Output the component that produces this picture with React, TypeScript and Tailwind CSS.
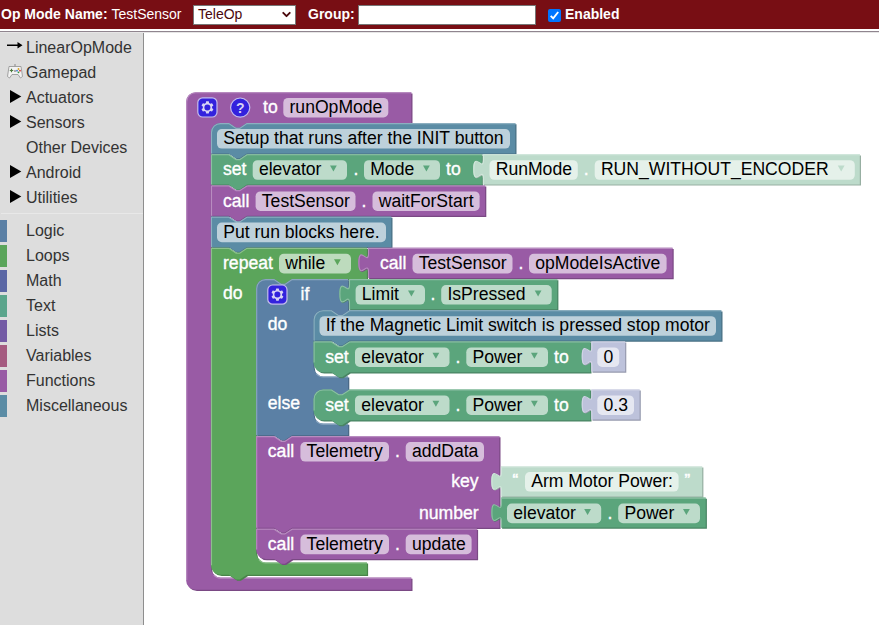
import React from "react";
import { ChevronDown } from "lucide-react";

const U = 1.2;
const PURPLE = "#995ba5";
const LOOP = "#5ba55b";
const TEAL = "#5ba57c";
const LOGIC = "#5b80a5";
const MISC = "#5b8ca5";
const MINT = "#bddbcb";
const LILAC = "#bdc2db";

const notch = `l ${6 * U},${4 * U} h ${3 * U} l ${6 * U},${-4 * U}`;
const notchBack = `l ${-6 * U},${4 * U} h ${-3 * U} l ${-6 * U},${-4 * U}`;
const tabUp = `c 0,${-10 * U} ${-8 * U},${8 * U} ${-8 * U},${-7.5 * U} s ${8 * U},${2.5 * U} ${8 * U},${-7.5 * U}`;
const R = 8 * U;
const BASE = 20.8;

type Hole = { x: number; top: number; bottom: number; arm: number };
type BlockProps = {
  x: number;
  y: number;
  right: number;
  bottom: number;
  fill: string;
  output?: boolean;
  hat?: boolean;
  round?: boolean;
  last?: boolean;
  holes?: Hole[];
};

function shade(hex: string, to: number, amount: number) {
  const n = parseInt(hex.slice(1), 16);
  const mix = (c: number) => Math.round(c + (to - c) * amount);
  return `rgb(${mix(n >> 16)},${mix((n >> 8) & 255)},${mix(n & 255)})`;
}

function Block({ x, y, right, bottom, fill, output, hat, round, last, holes = [] }: BlockProps) {
  const r = right - 1.2;
  const b = bottom - 1.2;
  const rounded = round || hat;
  let d = rounded ? `M ${x},${y + R} a ${R},${R} 0 0 1 ${R},${-R}` : `M ${x},${y}`;
  if (!output && !hat) d += ` H ${x + 15 * U} ${notch}`;
  d += ` H ${r}`;
  for (const h of holes) {
    d += ` V ${h.top} H ${h.x + 30 * U} ${notchBack} H ${h.x + R} a ${R},${R} 0 0 0 ${-R},${R} V ${h.bottom - R} a ${R},${R} 0 0 0 ${R},${R} H ${h.arm - 1.2}`;
  }
  d += ` V ${b}`;
  if (output) d += ` H ${x} V ${y + 20 * U} ${tabUp} Z`;
  else if (hat) d += ` H ${x + R} a ${R},${R} 0 0 1 ${-R},${-R} Z`;
  else d += ` H ${x + 30 * U} ${notchBack} ${last ? `H ${x + R} a ${R},${R} 0 0 1 ${-R},${-R}` : `H ${x}`} Z`;

  const lx = x + 0.6;
  const ly = y + 0.6;
  let light = output
    ? `M ${lx},${b} V ${y + 20 * U} ${tabUp} V ${ly}`
    : rounded
      ? `M ${lx},${last || hat ? b - R : b} V ${y + R} a ${R - 0.6},${R - 0.6} 0 0 1 ${R - 0.6},${-R + 0.6}`
      : `M ${lx},${last ? b - R : b} V ${ly}`;
  if (!output && !hat) light += ` H ${x + 15 * U} ${notch}`;
  light += ` H ${r}`;
  for (const h of holes) {
    light += ` M ${h.x + 2.8},${h.bottom - 2.8} A ${R},${R} 0 0 0 ${h.x + R},${h.bottom + 0.6} H ${h.arm - 1.2}`;
  }
  return (
    <g transform="translate(-0.5 -0.4)">
      <path d={d} transform="translate(1.2 1.2)" fill={shade(fill, 0, 0.2)} />
      <path d={d} fill={fill} />
      <path d={light} fill="none" stroke={shade(fill, 255, 0.3)} strokeWidth={1.1} />
    </g>
  );
}

function Label({ x, y, children, end }: { x: number; y: number; children: string; end?: boolean }) {
  return (
    <text x={x} y={y} fill="#fff" stroke="#fff" strokeWidth={0.35} textAnchor={end ? "end" : "start"}>
      {children}
    </text>
  );
}

type FieldProps = { x: number; to: number; row: number; children: string; arrow?: string };
function Field({ x, to, row, children, arrow }: FieldProps) {
  const ax = to - 13.6;
  const ay = row + 11;
  return (
    <g>
      <rect x={x} y={row + 5.6} width={to - x} height={19.6} rx={4.8} fill="#fff" fillOpacity={0.6} />
      <text x={x + 6.2} y={row + BASE} fill="#000">
        {children}
      </text>
      {arrow && <path d={`M ${ax - 3.4},${ay} h 6.8 l -3.4,6 z`} fill={arrow} />}
    </g>
  );
}

function Gear({ x, y }: { x: number; y: number }) {
  return (
    <g transform={`translate(${x} ${y}) scale(1.2)`}>
      <rect x="0.5" y="0.5" width="16" height="16" rx="4" fill="#3322dd" stroke="#c5bdec" strokeWidth="1" />
      <path
        transform="translate(0.5 0.5)"
        fill="#d8d4f4"
        d="m4.203,7.296 0,1.368 -0.92,0.677 -0.11,0.41 0.9,1.559 0.41,0.11 1.043,-0.457 1.187,0.683 0.127,1.134 0.3,0.3 1.8,0 0.3,-0.299 0.127,-1.138 1.185,-0.682 1.046,0.458 0.409,-0.11 0.9,-1.559 -0.11,-0.41 -0.92,-0.677 0,-1.366 0.92,-0.677 0.11,-0.41 -0.9,-1.559 -0.409,-0.109 -1.046,0.458 -1.185,-0.682 -0.127,-1.138 -0.3,-0.299 -1.8,0 -0.3,0.3 -0.126,1.135 -1.187,0.682 -1.043,-0.457 -0.41,0.11 -0.899,1.559 0.108,0.409z"
      />
      <circle cx="8.5" cy="8.5" r="2.5" fill="#3322dd" />
    </g>
  );
}

const Y = { def: 92.6, c1: 123.4, set: 154.6, call: 185.8, c2: 217, rep: 248.2, iff: 279.4, c3: 310.6, set1: 341.8, set2: 389.8, add: 436.4, key: 466.8, num: 498, upd: 529 };

function SetPower({ row, value, fieldTo, right }: { row: number; value: string; fieldTo: number; right: number }) {
  return (
    <g>
      <Block x={314} y={row} right={592} bottom={row + 32} fill={TEAL} round={row === Y.set2} last />
      <Block x={591.8} y={row} right={right} bottom={row + 31.4} fill={LILAC} output />
      <Label x={325.2} y={row + BASE}>set</Label>
      <Field x={355} to={449.5} row={row} arrow={TEAL}>elevator</Field>
      <Label x={455.5} y={row + BASE}>.</Label>
      <Field x={466.3} to={548} row={row} arrow={TEAL}>Power</Field>
      <Label x={554} y={row + BASE}>to</Label>
      <Field x={597.3} to={fieldTo} row={row}>{value}</Field>
    </g>
  );
}

function Workspace() {
  return (
    <svg className="block h-full w-full font-['Liberation_Sans',Arial,sans-serif] text-[17.6px]" viewBox="144 33 735 592" preserveAspectRatio="xMinYMin slice">
      <Block x={186.6} y={Y.def} right={413} bottom={591.4} fill={PURPLE} hat holes={[{ x: 211.4, top: Y.c1, bottom: 578, arm: 413 }]} />
      <Gear x={197.2} y={97.2} />
      <circle cx="240.2" cy="107.6" r="9.6" fill="#3322dd" stroke="#c5bdec" strokeWidth="1.2" />
      <text x="240.2" y="112.6" textAnchor="middle" className="text-[14px] font-bold" fill="#d8d4f4">?</text>
      <Label x={263} y={Y.def + 20.4}>to</Label>
      <Field x={283.3} to={388.3} row={Y.def - 0.3}>runOpMode</Field>

      <Block x={211.4} y={Y.c1} right={517} bottom={Y.set + 0.4} fill={MISC} round />
      <Field x={217} to={510} row={Y.c1}>Setup that runs after the INIT button</Field>

      <Block x={211.4} y={Y.set} right={483.6} bottom={Y.call + 0.4} fill={TEAL} />
      <Block x={483.3} y={Y.set} right={861.5} bottom={Y.call + 0.2} fill={MINT} output />
      <Label x={223} y={Y.set + BASE}>set</Label>
      <Field x={252.7} to={347} row={Y.set} arrow={TEAL}>elevator</Field>
      <Label x={353.4} y={Y.set + BASE}>.</Label>
      <Field x={364} to={440} row={Y.set} arrow={TEAL}>Mode</Field>
      <Label x={446} y={Y.set + BASE}>to</Label>
      <Field x={489.5} to={577.8} row={Y.set}>RunMode</Field>
      <Label x={583.8} y={Y.set + BASE}>.</Label>
      <Field x={594.7} to={854.8} row={Y.set} arrow={MINT}>RUN_WITHOUT_ENCODER</Field>

      <Block x={211.4} y={Y.call} right={486.8} bottom={Y.c2 + 0.4} fill={PURPLE} />
      <Label x={223} y={Y.call + BASE}>call</Label>
      <Field x={255.6} to={355.5} row={Y.call}>TestSensor</Field>
      <Label x={361.5} y={Y.call + BASE}>.</Label>
      <Field x={372.5} to={479.6} row={Y.call}>waitForStart</Field>

      <Block x={211.4} y={Y.c2} right={393} bottom={Y.rep + 0.4} fill={MISC} />
      <Field x={217} to={386} row={Y.c2}>Put run blocks here.</Field>

      <Block x={211.4} y={Y.rep} right={368.6} bottom={576.4} fill={LOOP} last holes={[{ x: 256.6, top: Y.iff, bottom: 562.8, arm: 368.6 }]} />
      <Block x={368.4} y={Y.rep} right={674.2} bottom={Y.iff + 0.2} fill={PURPLE} output />
      <Label x={223} y={Y.rep + BASE}>repeat</Label>
      <Field x={279} to={351} row={Y.rep} arrow={LOOP}>while</Field>
      <Label x={380} y={Y.rep + BASE}>call</Label>
      <Field x={412.5} to={512.5} row={Y.rep}>TestSensor</Field>
      <Label x={518.5} y={Y.rep + BASE}>.</Label>
      <Field x={529} to={666.6} row={Y.rep}>opModeIsActive</Field>
      <Label x={223} y={299.2}>do</Label>

      <Block
        x={256.6} y={Y.iff} right={349.8} bottom={Y.add + 0.4} fill={LOGIC} round
        holes={[
          { x: 314, top: Y.c3, bottom: 376.8, arm: 349.8 },
          { x: 314, top: Y.set2, bottom: 424, arm: 349.8 },
        ]}
      />
      <Block x={349.4} y={Y.iff} right={558.9} bottom={Y.c3 + 0.2} fill={TEAL} output />
      <Gear x={267.2} y={284.4} />
      <Label x={300.5} y={299.8}>if</Label>
      <Field x={355.6} to={425} row={Y.iff} arrow={TEAL}>Limit</Field>
      <Label x={430.5} y={Y.iff + BASE}>.</Label>
      <Field x={441.2} to={551.7} row={Y.iff} arrow={TEAL}>IsPressed</Field>
      <Label x={267.8} y={330}>do</Label>
      <Label x={267.8} y={409}>else</Label>

      <Block x={314} y={Y.c3} right={723} bottom={Y.set1 + 0.4} fill={MISC} round />
      <Field x={319.5} to={716} row={Y.c3}>If the Magnetic Limit switch is pressed stop motor</Field>
      <SetPower row={Y.set1} value="0" fieldTo={619.2} right={626.8} />
      <SetPower row={Y.set2} value="0.3" fieldTo={634} right={641.3} />

      <Block x={256.6} y={Y.add} right={501} bottom={Y.upd + 0.4} fill={PURPLE} />
      <Block x={501.4} y={Y.key} right={703.9} bottom={Y.num + 0.2} fill={MINT} output />
      <Block x={501.4} y={Y.num} right={707.4} bottom={Y.upd + 0.2} fill={TEAL} output />
      <Label x={267.8} y={Y.add + BASE}>call</Label>
      <Field x={300.4} to={389} row={Y.add}>Telemetry</Field>
      <Label x={395} y={Y.add + BASE}>.</Label>
      <Field x={405.7} to={484} row={Y.add}>addData</Field>
      <Label x={478.6} y={487} end>key</Label>
      <Label x={478.6} y={518.6} end>number</Label>
      <text x={512.6} y={485.5} fill="#fff" stroke="#fff" strokeWidth={0.5} className="text-[17px]">“</text>
      <Field x={525} to={678.6} row={Y.key - 0.4}>Arm Motor Power:</Field>
      <text x={684.6} y={485.5} fill="#fff" stroke="#fff" strokeWidth={0.5} className="text-[17px]">”</text>
      <Field x={507} to={601.2} row={Y.num} arrow={TEAL}>elevator</Field>
      <Label x={607.4} y={Y.num + BASE}>.</Label>
      <Field x={618.2} to={700} row={Y.num} arrow={TEAL}>Power</Field>

      <Block x={256.6} y={Y.upd} right={478.6} bottom={560.6} fill={PURPLE} last />
      <Label x={267.8} y={Y.upd + BASE}>call</Label>
      <Field x={300.4} to={389} row={Y.upd}>Telemetry</Field>
      <Label x={395} y={Y.upd + BASE}>.</Label>
      <Field x={405.7} to={471.6} row={Y.upd}>update</Field>
    </svg>
  );
}

function ArrowIcon() {
  return (
    <svg className="h-4 w-4" viewBox="0 0 16 16">
      <path d="M0 5.500h10.500V3l5 3.200-5 3.200V7H0z" fill="#000" />
    </svg>
  );
}

function GamepadIcon() {
  return (
    <svg className="h-4 w-4" viewBox="0 0 16 16">
      <path d="M8 0v3" stroke="#888" />
      <path d="M2 2.500h12l1.500 10-2 1.500-2.500-3.500H5L2.500 14l-2-1.500z" fill="#f3f3f3" stroke="#999" strokeWidth="0.9" />
      <path d="M2.800 6.500h3.400M4.500 4.800v3.400" stroke="#4c7a3c" strokeWidth="1.200" />
      <path d="M7 7h2" stroke="#666" />
      <circle cx="11.500" cy="5" r=".9" fill="#d9a520" />
      <circle cx="10" cy="6.700" r=".9" fill="#3d7fd0" />
      <circle cx="13" cy="6.700" r=".9" fill="#d33" />
      <circle cx="11.500" cy="8.300" r=".9" fill="#2a9a3a" />
    </svg>
  );
}

function Triangle() {
  return (
    <svg className="h-4 w-4" viewBox="0 0 16 16">
      <path d="M3 1v13l11.300-6.500z" fill="#000" />
    </svg>
  );
}

const devices: { name: string; icon?: React.ReactNode }[] = [
  { name: "LinearOpMode", icon: <ArrowIcon /> },
  { name: "Gamepad", icon: <GamepadIcon /> },
  { name: "Actuators", icon: <Triangle /> },
  { name: "Sensors", icon: <Triangle /> },
  { name: "Other Devices" },
  { name: "Android", icon: <Triangle /> },
  { name: "Utilities", icon: <Triangle /> },
];

const categories = [
  { name: "Logic", color: "bg-[#5b80a5]" },
  { name: "Loops", color: "bg-[#5ba55b]" },
  { name: "Math", color: "bg-[#5b67a5]" },
  { name: "Text", color: "bg-[#5ba58c]" },
  { name: "Lists", color: "bg-[#745ba5]" },
  { name: "Variables", color: "bg-[#a55b80]" },
  { name: "Functions", color: "bg-[#995ba5]" },
  { name: "Miscellaneous", color: "bg-[#5b8ca5]" },
];

export default function App() {
  return (
    <div className="flex h-[625px] w-[879px] flex-col overflow-hidden bg-white font-['Liberation_Sans',Arial,sans-serif]">
      <header className="flex h-[29px] shrink-0 items-center bg-[#780e14] pl-px text-[14px] text-white">
        <b className="w-[110.5px] whitespace-nowrap">Op Mode Name:</b>
        <span className="w-[81.5px]">TestSensor</span>
        <div className="flex h-5 w-[103px] items-center justify-between border border-[#767676] bg-white pr-0.5 pl-1 text-[#4a080c]">
          <span>TeleOp</span>
          <ChevronDown size={13} strokeWidth={3.5} />
        </div>
        <b className="ml-3 w-[50px]">Group:</b>
        <div className="h-5 w-[178px] border border-[#767676] bg-white" />
        <div className="mt-0.5 ml-3 flex h-[13px] w-[13px] items-center justify-center rounded-[2px] bg-[#0075ff]">
          <svg className="h-[11px] w-[11px]" viewBox="0 0 11 11">
            <path d="M1.700 5.800l2.500 2.500 5-6.300" fill="none" stroke="#fff" strokeWidth="1.900" />
          </svg>
        </div>
        <b className="ml-1">Enabled</b>
      </header>
      <div className="mt-0.5 h-0.5 shrink-0 border-t border-[#90858f] bg-[#e6e6e6]" />
      <div className="flex min-h-0 flex-1">
        <aside className="w-36 shrink-0 border-r border-[#8e8e8e] bg-[#ddd] pt-0.5 text-[16px] text-[#333]">
          {devices.map((d) => (
            <div key={d.name} className="flex h-[25px] items-center pl-[7px]">
              <span className="mr-[3px] mb-px h-4 w-4">{d.icon}</span>
              <span>{d.name}</span>
            </div>
          ))}
          <div className="mt-[3px] mb-1 ml-px h-px bg-[#e8e8e8]" />
          {categories.map((c) => (
            <div key={c.name} className="flex h-[25px] items-center">
              <span className={`mr-[19px] h-[22px] w-[7px] ${c.color}`} />
              <span>{c.name}</span>
            </div>
          ))}
        </aside>
        <main className="min-w-0 flex-1">
          <Workspace />
        </main>
      </div>
    </div>
  );
}
